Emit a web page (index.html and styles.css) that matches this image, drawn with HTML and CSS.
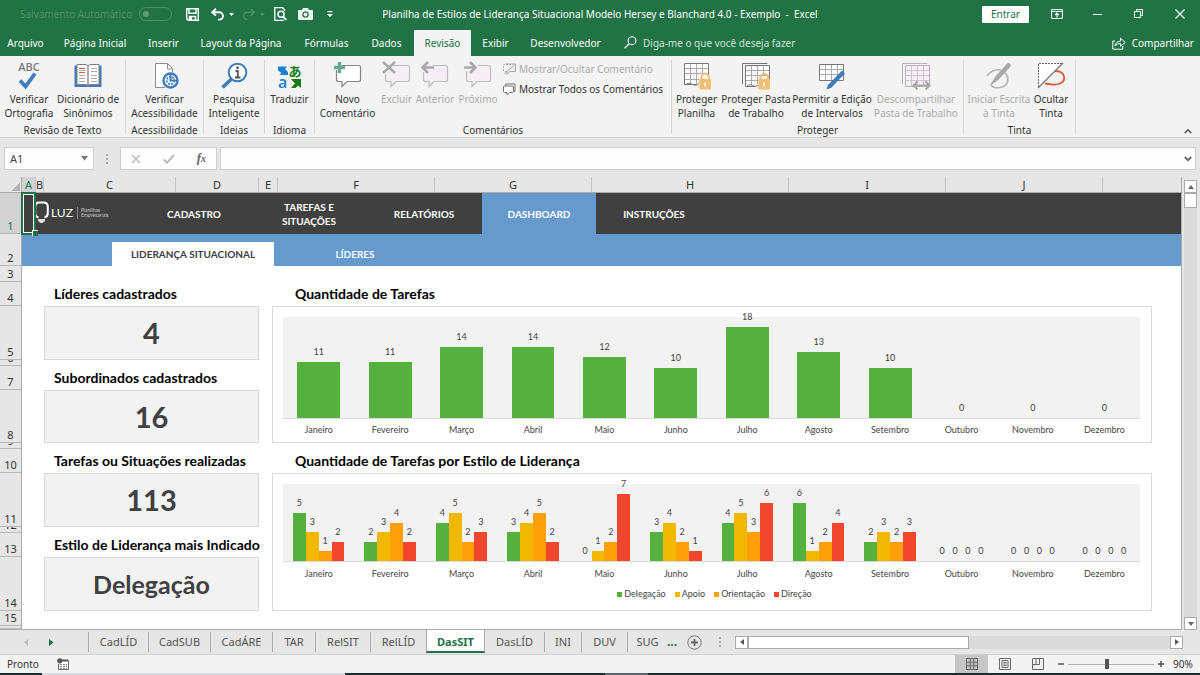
FILE: index.html
```html
<!DOCTYPE html>
<html lang="pt-BR">
<head>
<meta charset="utf-8">
<title>Planilha de Estilos de Liderança Situacional - Excel</title>
<link rel="stylesheet" href="styles.css">
</head>
<body>
<div class="app">
  <header class="titlebar">
    <div class="quick">
      <span class="autosave-label" id="autosave">Salvamento Automático</span>
      <button class="toggle" aria-labelledby="autosave"><span class="toggle-knob"></span></button>
      <button class="qbtn save" aria-label="Salvar"><svg width="13" height="13" viewBox="0 0 13 13"><path d="M.7 .7h11.6v11.6H2.2L.7 10.8z M3 .7v4.6h7V.7 M3.5 12.3V8.5h6v3.8" fill="none" stroke="#fff" stroke-width="1.5"/><path d="M4 9h2v3H4z" fill="#fff"/></svg></button>
      <button class="qbtn undo" aria-label="Desfazer"><svg width="24" height="13" viewBox="0 0 24 13"><path d="M5 .8 1.2 4.3 5 7.6 M1.5 4.3h6.8a3.6 3.6 0 0 1 0 7.3H7" fill="none" stroke="#fff" stroke-width="1.9"/><path d="M18 5h5l-2.500 3z" fill="#fff"/></svg></button>
      <button class="qbtn redo" aria-label="Refazer" disabled><svg width="24" height="13" viewBox="0 0 24 13"><path d="M8.500 .8 12.300 4.300 8.500 7.600 M12 4.300H5.200a3.500 3.500 0 0 0 0 7.200" fill="none" stroke="#4c8f69" stroke-width="1.600"/><path d="M18 5h5l-2.500 3z" fill="#4c8f69"/></svg></button>
      <button class="qbtn preview" aria-label="Visualizar impressão"><svg width="13" height="14" viewBox="0 0 13 14"><path d="M10.500 4V2.700L8.500.7H.8v12.600h9" fill="none" stroke="#fff" stroke-width="1.300"/><circle cx="7" cy="7.300" r="3" fill="none" stroke="#fff" stroke-width="1.500"/><path d="m9 9.500 3.300 3.300" stroke="#fff" stroke-width="1.800"/></svg></button>
      <button class="qbtn camera" aria-label="Câmera"><svg width="15" height="12" viewBox="0 0 15 12"><path d="M1 2h3l1-2h5l1 2h3q1 0 1 1v8q0 1-1 1H1q-1 0-1-1V3q0-1 1-1z" fill="#f1f6f3"/><circle cx="7.500" cy="6.500" r="2.600" fill="none" stroke="#217346" stroke-width="1.300"/></svg></button>
      <button class="qbtn more" aria-label="Personalizar"><svg width="6" height="7" viewBox="0 0 6 7"><path d="M.5 0h5v1.200h-5z M0 3h6L3 6z" fill="#fff"/></svg></button>
    </div>
    <div class="title">Planilha de Estilos de Liderança Situacional Modelo Hersey e Blanchard 4.0 - Exemplo &nbsp;-&nbsp; Excel</div>
    <div class="window-actions">
      <button class="signin">Entrar</button>
      <button class="wbtn" aria-label="Opções da faixa"><svg width="12" height="10" viewBox="0 0 12 10"><path d="M.6 .6h10.800v8.800H.600z M.6 2.500h10.800" fill="none" stroke="#fff"/><path d="M6 8.500V4.500M4.200 6 6 4.200 7.800 6" fill="none" stroke="#fff" stroke-width="1.200"/></svg></button>
      <button class="wbtn" aria-label="Minimizar"><svg width="10" height="10" viewBox="0 0 10 10"><path d="M0 5.500h9" stroke="#fff"/></svg></button>
      <button class="wbtn" aria-label="Restaurar"><svg width="10" height="10" viewBox="0 0 10 10"><path d="M.5 2.500h6v6h-6z M2.500 2.500v-2h6v6h-2" fill="none" stroke="#fff"/></svg></button>
      <button class="wbtn" aria-label="Fechar"><svg width="10" height="10" viewBox="0 0 10 10"><path d="m.5.5 9 9m0-9-9 9" stroke="#fff" stroke-width="1.100"/></svg></button>
    </div>
  </header>

  <nav class="menubar">
    <button class="menu m-arquivo">Arquivo</button>
    <button class="menu m-pagina">Página Inicial</button>
    <button class="menu m-inserir">Inserir</button>
    <button class="menu m-layout">Layout da Página</button>
    <button class="menu m-formulas">Fórmulas</button>
    <button class="menu m-dados">Dados</button>
    <button class="menu m-revisao active">Revisão</button>
    <button class="menu m-exibir">Exibir</button>
    <button class="menu m-dev">Desenvolvedor</button>
    <label class="tellme"><svg width="13" height="13" viewBox="0 0 13 13"><circle cx="8" cy="4.700" r="3.900" fill="none" stroke="#fff" stroke-width="1.100"/><path d="M5.200 7.600.7 12.300" stroke="#fff" stroke-width="1.300"/></svg><input type="text" placeholder="Diga-me o que você deseja fazer" aria-label="Diga-me o que você deseja fazer"></label>
    <button class="share"><svg width="14" height="13" viewBox="0 0 14 13"><path d="M3 4H.8v8.200h10V9" fill="none" stroke="#fff"/><path d="M3 9c.5-3 2.200-4.800 5.500-4.800V1.200l4.800 4.200-4.800 3.800V6.500C6 6.500 4.300 7.500 3 9z" fill="none" stroke="#fff"/></svg>Compartilhar</button>
  </nav>

  <section class="ribbon">
    <div class="group">
      <div class="tools">
        <button class="tool w58"><svg width="28" height="28" viewBox="0 0 28 28"><text x="14" y="9" text-anchor="middle" class="abc">ABC</text><path d="m5 18.500 5.500 6L20 11.500" fill="none" stroke="#3f7cbc" stroke-width="3.800"/></svg><span>Verificar<br>Ortografia</span></button>
        <button class="tool w60"><svg width="28" height="28" viewBox="0 0 28 28"><path d="M.5 3.500h27v21.500H.500z" fill="#3f7cbc"/><path d="M3 2.500h9l2 1.500 2-1.500h9v20h-9l-2 1-2-1H3z" fill="#fff" stroke="#7f7f7f"/><path d="M14 4v19" stroke="#777" stroke-width="1.200"/><path d="M5 6.500h6M5 10.500h6" stroke="#d9593c"/><path d="M5 8.500h6M5 13.500h6M5 16.500h6M5 19.500h6M17 6.500h6M17 9.500h6M17 13.500h6M17 16.500h6M17 19.500h6" stroke="#aaa"/></svg><span>Dicionário de<br>Sinônimos</span></button>
      </div>
      <div class="group-name">Revisão de Texto</div>
    </div>
    <div class="group g77">
      <div class="tools"><button class="tool w77"><svg width="28" height="28" viewBox="0 0 28 28"><path d="M4.500 1.500h12l5 5v19h-17z" fill="#fff" stroke="#8a8a8a"/><path d="M16.500 1.500v5.500h5" fill="none" stroke="#8a8a8a"/><circle cx="19.500" cy="18.500" r="9" fill="#f3f3f3"/><circle cx="19.500" cy="18.500" r="7" fill="#fff" stroke="#3f7cbc" stroke-width="2.400"/><circle cx="19.500" cy="18.500" r="3.800" fill="none" stroke="#3f7cbc" stroke-width="1.800" stroke-dasharray="2 1.200"/><path d="M19.500 12v6.500h7" fill="none" stroke="#3f7cbc" stroke-width="2"/></svg><span>Verificar<br>Acessibilidade</span></button></div>
      <div class="group-name">Acessibilidade</div>
    </div>
    <div class="group">
      <div class="tools"><button class="tool w60"><svg width="28" height="28" viewBox="0 0 28 28"><path d="M12 16.500 2.500 25.500" stroke="#3f7cbc" stroke-width="3.600"/><circle cx="17.500" cy="10.500" r="8.800" fill="#fff" stroke="#3f7cbc" stroke-width="2"/><path d="M15.500 9h2.300v6.500M15 15.500h5.500" fill="none" stroke="#555" stroke-width="1.800"/><circle cx="17.500" cy="5.800" r="1.400" fill="#555"/></svg><span>Pesquisa<br>Inteligente</span></button></div>
      <div class="group-name">Ideias</div>
    </div>
    <div class="group">
      <div class="tools"><button class="tool w49"><svg width="28" height="28" viewBox="0 0 28 28"><path d="M2 4.500h9l-2 2.500 3 3v3H3.500l2-2L2 8.500z" fill="#1b7fd4"/><text x="2" y="25.500" class="tr-a">a</text><text x="12.500" y="13.500" class="tr-j">あ</text><path d="M15 17h10v9l-3-2.500-2.500 2.500h-4.500l4-4.500z" fill="#107c10"/></svg><span>Traduzir</span></button></div>
      <div class="group-name">Idioma</div>
    </div>
    <div class="group g356">
      <div class="tools">
        <button class="tool w65"><svg width="28" height="28" viewBox="0 0 28 28"><path d="M8 3.500h16.500q2 0 2 2v12q0 2-2 2H13l-5 5v-5H4.500q-2 0-2-2V8" fill="#fff" stroke="#858585" stroke-width="1.200"/><path d="M5.500 0v11M0 5.500h11" stroke="#6aa78e" stroke-width="3.400"/></svg><span>Novo<br>Comentário</span></button>
        <button class="tool w33" disabled><svg width="28" height="28" viewBox="0 0 28 28"><path d="M10 3.500h14.500q2 0 2 2v12q0 2-2 2H13l-5 5v-5H4.500q-2 0-2-2V12" fill="#f5eef5" stroke="#bdbdbd" stroke-width="1.200"/><path d="m0 0 12 11M12 0 0 11" stroke="#a9a9a9" stroke-width="2.500"/></svg><span>Excluir</span></button>
        <button class="tool w44" disabled><svg width="28" height="28" viewBox="0 0 28 28"><path d="M12 3.500h12.500q2 0 2 2v12q0 2-2 2H13l-5 5v-5H4.500q-2 0-2-2V10" fill="#f5eef5" stroke="#bdbdbd" stroke-width="1.200"/><path d="M13 5.500H2M7 0 1.500 5.500 7 11" fill="none" stroke="#a9a9a9" stroke-width="2.500"/></svg><span>Anterior</span></button>
        <button class="tool w42" disabled><svg width="28" height="28" viewBox="0 0 28 28"><path d="M14 3.500h10.500q2 0 2 2v12q0 2-2 2H13l-5 5v-5H4.500q-2 0-2-2V9" fill="#f5eef5" stroke="#bdbdbd" stroke-width="1.200"/><path d="M0 5.500h11M6 0l5.500 5.500L6 11" fill="none" stroke="#a9a9a9" stroke-width="2.500"/></svg><span>Próximo</span></button>
        <div class="small-tools">
          <button class="small-tool" disabled><svg width="13" height="13" viewBox="0 0 13 13"><path d="M2.500 1h10v7.500H6.500L4 11.500V8.500H2" fill="#f5eef5" stroke="#a9a9a9"/><path d="M.5 8V1.500h9" fill="none" stroke="#a9a9a9" stroke-dasharray="2 1"/><path d="M11.500 2 1 11" stroke="#a9a9a9"/></svg>Mostrar/Ocultar Comentário</button>
          <button class="small-tool"><svg width="13" height="13" viewBox="0 0 13 13"><path d="M2.500 3V1h9.500v7.500h-1.500" fill="none" stroke="#777"/><path d="M1.500 3h8q1 0 1 1v4.500q0 1-1 1H6.500L4 12V9.500H1.500q-1 0-1-1V4q0-1 1-1z" fill="#fff" stroke="#777"/></svg>Mostrar Todos os Comentários</button>
        </div>
      </div>
      <div class="group-name">Comentários</div>
    </div>
    <div class="group g291">
      <div class="tools">
        <button class="tool w49"><svg width="28" height="28" viewBox="0 0 28 28"><path d="M1.500 1.500h24v16M1.500 1.500v21h12" fill="#fff" stroke="#777"/><path d="M7.500 2v20M13.500 2v20M19.500 2v12M2 6.500h23M2 11.500h23M2 17.500h14" stroke="#aaa"/><path d="M3 22.500c5-4 8 4 13-1" fill="none" stroke="#777"/><rect x="16.500" y="17" width="11.500" height="10.500" rx="1" fill="#efbf72"/><path d="M18.500 17v-1.500a3.700 3.700 0 0 1 7.400 0V17" fill="none" stroke="#efbf72" stroke-width="2"/><path d="M22.200 20.500v4" stroke="#fff" stroke-width="1.500"/></svg><span>Proteger<br>Planilha</span></button>
        <button class="tool w70"><svg width="28" height="28" viewBox="0 0 28 28"><path d="M.5 22V1.500h25" fill="none" stroke="#777"/><path d="M3.500 3.500h24v14M3.500 3.500v21h10" fill="#fff" stroke="#777"/><path d="M9.500 4v19M15.500 4v18M21.500 4v10M4 8.500h23M4 13.500h23M4 18.500h13" stroke="#aaa"/><path d="M5 24c4-4 7 3 12-1" fill="none" stroke="#777"/><rect x="16.500" y="17" width="11.500" height="10.500" rx="1" fill="#efbf72"/><path d="M18.500 17v-1.500a3.700 3.700 0 0 1 7.400 0V17" fill="none" stroke="#efbf72" stroke-width="2"/><path d="M22.200 20.500v4" stroke="#fff" stroke-width="1.500"/></svg><span>Proteger Pasta<br>de Trabalho</span></button>
        <button class="tool w82"><svg width="28" height="28" viewBox="0 0 28 28"><path d="M1.500 2.500h24v16h-24z" fill="#fff" stroke="#777"/><path d="M7.500 3v15M13.500 3v15M19.500 3v15M2 7.500h23M2 12.500h23" stroke="#aaa"/><path d="M25.500 10 11.500 24.500" stroke="#3f7cbc" stroke-width="4.200"/><path d="m10 22.500 3.500 3.300-5 1.700z" fill="#3f7cbc"/></svg><span>Permitir a Edição<br>de Intervalos</span></button>
        <button class="tool w86" disabled><svg width="28" height="28" viewBox="0 0 28 28"><path d="M.5 22V1.500h25" fill="none" stroke="#b9b2b9"/><path d="M3.500 3.500h24v21h-24z" fill="#f5eef5" stroke="#b9b2b9"/><path d="M9.500 4v20M15.500 4v20M21.500 4v20M4 8.500h23M4 13.500h23M4 18.500h23" stroke="#ccc5cc"/><path d="M12 23.500h15M15.500 19.500l-4 4 4 4M23.500 19.500l4 4-4 4" fill="none" stroke="#a9a9a9" stroke-width="2.200"/></svg><span>Descompartilhar<br>Pasta de Trabalho</span></button>
      </div>
      <div class="group-name">Proteger</div>
    </div>
    <div class="group g111">
      <div class="tools">
        <button class="tool w70" disabled><svg width="28" height="28" viewBox="0 0 28 28"><path d="M2 14c3-5 9-7 14-6M19 10c6 5 5 14-4 15.500-5 .8-9-.5-8-2.500" fill="none" stroke="#b5b5b5" stroke-width="1.700"/><path d="M23.500 3.500 12 16" stroke="#a9a9a9" stroke-width="4.600" stroke-linecap="round"/><path d="M10.500 15 4 24l8-5z" fill="#a9a9a9"/></svg><span>Iniciar Escrita<br>à Tinta</span></button>
        <button class="tool w34"><svg width="28" height="28" viewBox="0 0 28 28"><path d="M18 9c10 0 12 9 5 12.500-4 2-10 1-15 0" fill="none" stroke="#d9593c" stroke-width="1.800"/><path d="M1.500 1.500h24l-24 24z" fill="#fff"/><path d="M25 1.500H1.500V25" fill="none" stroke="#666" stroke-dasharray="2 1"/><path d="M26 1 1 26" stroke="#777" stroke-width="1.200"/></svg><span>Ocultar<br>Tinta</span></button>
      </div>
      <div class="group-name">Tinta</div>
    </div>
    <button class="collapse" aria-label="Recolher faixa"><svg width="8" height="6" viewBox="0 0 8 6"><path d="m.8 5 3.200-3.200L7.200 5" fill="none" stroke="#555" stroke-width="1.600"/></svg></button>
  </section>

  <section class="formula-bar">
    <div class="namebox"><input type="text" value="A1" aria-label="Caixa de nome"><svg width="7" height="5" viewBox="0 0 7 5"><path d="M0 0h7L3.500 4.500z" fill="#777"/></svg></div>
    <span class="dots"></span>
    <div class="fx">
      <button aria-label="Cancelar"><svg width="10" height="10" viewBox="0 0 10 10"><path d="m1 1 8 8m0-8-8 8" stroke="#bdbdbd" stroke-width="1.600"/></svg></button>
      <button aria-label="Inserir"><svg width="12" height="10" viewBox="0 0 12 10"><path d="M.8 5.500 4 8.700 11 1" fill="none" stroke="#bdbdbd" stroke-width="2"/></svg></button>
      <button class="fx-label" aria-label="Inserir função">f<small>x</small></button>
    </div>
    <div class="formula"><input type="text" aria-label="Barra de fórmulas"><svg width="8" height="6" viewBox="0 0 8 6"><path d="m.8 1 3.200 3.200L7.200 1" fill="none" stroke="#666" stroke-width="1.800"/></svg></div>
  </section>

  <main class="workbook">
    <div class="grid-area">
      <div class="col-heads">
        <span class="corner"></span><span class="ca">A</span><span class="cb">B</span><span class="cc">C</span><span class="cd">D</span><span class="ce">E</span><span class="cf">F</span><span class="cf">G</span><span class="ch">H</span><span class="cf">I</span><span class="cf">J</span>
      </div>
      <div class="sheet">
        <div class="row-heads">
          <span class="current">1</span><span>2</span><span>3</span><span>4</span><span>5</span><span>6</span><span>7</span><span>8</span><span>9</span><span>10</span><span>11</span><span>12</span><span>13</span><span>14</span><span>15</span><span></span>
        </div>
        <div class="page">
          <div class="selection"></div>
          <nav class="mainnav">
            <div class="logo"><svg width="15" height="23" viewBox="0 0 15 23"><path d="M4.500 16.500C2 16 1.200 14 1.200 12V6q0-4.500 4-4.500h4.600q4 0 4 4.500v6c0 2.500-1 4-3.300 4.500" fill="none" stroke="#fff" stroke-width="2"/><path d="M4 18h7v2L8.500 22h-2L4 20z" fill="#ddd"/></svg><b>LUZ</b><span>Planilhas<br>Empresariais</span></div>
            <a href="#">CADASTRO</a><a href="#">TAREFAS E SITUAÇÕES</a><a href="#">RELATÓRIOS</a><a href="#" class="on">DASHBOARD</a><a href="#">INSTRUÇÕES</a>
          </nav>
          <nav class="subnav"><a href="#" class="on">LIDERANÇA SITUACIONAL</a><a href="#">LÍDERES</a></nav>
          <div class="dashboard">
            <h2 class="k1">Líderes cadastrados</h2><div class="card v1">4</div>
            <h2 class="k2">Subordinados cadastrados</h2><div class="card v2">16</div>
            <h2 class="k3">Tarefas ou Situações realizadas</h2><div class="card v3">113</div>
            <h2 class="k4">Estilo de Liderança mais Indicado</h2><div class="card v4 word">Delegação</div>
            <h2 class="t1">Quantidade de Tarefas</h2>
            <div class="chart c1"><div class="plot" id="plot-total"></div><div class="months"></div></div>
            <h2 class="t2">Quantidade de Tarefas por Estilo de Liderança</h2>
            <div class="chart c2"><div class="plot" id="plot-style"></div><div class="months"></div>
              <div class="legend"><span><i class="s0"></i>Delegação</span><span><i class="s1"></i>Apoio</span><span><i class="s2"></i>Orientação</span><span><i class="s3"></i>Direção</span></div>
            </div>
          </div>
        </div>
      </div>
    </div>
    <div class="vscroll">
      <button aria-label="Rolar para cima"><svg width="6" height="4" viewBox="0 0 6 4"><path d="M0 4h6L3 0z" fill="#666"/></svg></button>
      <span class="vthumb"></span>
      <button class="down" aria-label="Rolar para baixo"><svg width="6" height="4" viewBox="0 0 6 4"><path d="M0 0h6L3 4z" fill="#666"/></svg></button>
    </div>
  </main>

  <footer class="sheet-tabs">
    <div class="tab-nav">
      <button aria-label="Planilha anterior" disabled><svg width="5" height="7" viewBox="0 0 5 7"><path d="M4 0v7L0 3.500z" fill="#bbb"/></svg></button>
      <button aria-label="Próxima planilha"><svg width="5" height="7" viewBox="0 0 5 7"><path d="M0 0v7l4.500-3.500z" fill="#107040"/></svg></button>
    </div>
    <button class="stab w60">CadLÍD</button><button class="stab w62">CadSUB</button><button class="stab w62">CadÁRE</button><button class="stab w43">TAR</button><button class="stab w55">RelSIT</button><button class="stab w56">RelLÍD</button><button class="stab w59 on">DasSIT</button><button class="stab w59">DasLÍD</button><button class="stab w37">INI</button><button class="stab w46">DUV</button><button class="stab w40">SUG</button>
    <button class="ellipsis" aria-label="Mais planilhas">...</button>
    <button class="add" aria-label="Nova planilha"><svg width="15" height="15" viewBox="0 0 15 15"><circle cx="7.500" cy="7.500" r="6.700" fill="none" stroke="#777"/><path d="M7.500 4v7M4 7.500h7" stroke="#666" stroke-width="1.800"/></svg></button>
    <span class="dots"></span>
    <div class="hscroll">
      <button aria-label="Rolar para a esquerda"><svg width="4" height="6" viewBox="0 0 4 6"><path d="M4 0v6L0 3z" fill="#555"/></svg></button>
      <span class="hthumb"></span><span class="htrack"></span>
      <button aria-label="Rolar para a direita"><svg width="4" height="6" viewBox="0 0 4 6"><path d="M0 0v6l4-3z" fill="#555"/></svg></button>
    </div>
  </footer>

  <footer class="status">
    <span class="ready">Pronto</span>
    <button aria-label="Gravar macro"><svg width="12" height="12" viewBox="0 0 12 12"><path d="M5 2.500h6.500v9h-10V6" fill="#fff" stroke="#666"/><path d="M3 6.500h7M3 8.500h7M3 10.300h7" stroke="#777" stroke-dasharray="2 1"/><path d="M5 2.500h6" stroke="#555" stroke-width="2"/><circle cx="2.800" cy="2.800" r="2.600" fill="#555"/></svg></button>
    <div class="views">
      <button class="view on" aria-label="Normal"><svg width="12" height="12" viewBox="0 0 12 12"><path d="M.5.5h11v11H.500zM4.200.5v11M7.800.5v11M.5 4.200h11M.5 7.800h11" fill="none" stroke="#666"/></svg></button>
      <button class="view" aria-label="Layout da página"><svg width="12" height="12" viewBox="0 0 12 12"><path d="M.5.5h11v11H.500zM3 2.500h6v7H3z" fill="none" stroke="#666"/><path d="M4.200 4.500h3.600M4.200 6h3.600M4.200 7.500h3.600" stroke="#777"/></svg></button>
      <button class="view" aria-label="Quebras de página"><svg width="12" height="12" viewBox="0 0 12 12"><path d="M.5.5h11v11H.500zM.5 6.500h7v-6M4 .5v6" fill="none" stroke="#666"/></svg></button>
      <button class="zbtn" aria-label="Reduzir"><svg width="6" height="6" viewBox="0 0 6 6"><path d="M0 3h6" stroke="#555" stroke-width="1.500"/></svg></button>
      <input class="zoom" type="range" min="0" max="100" value="45" aria-label="Zoom">
      <button class="zbtn" aria-label="Ampliar"><svg width="6" height="6" viewBox="0 0 6 6"><path d="M0 3h6M3 0v6" stroke="#555" stroke-width="1.500"/></svg></button>
      <span class="pct">90%</span>
    </div>
  </footer>
  <div class="taskline"></div>
</div>
<script src="script.js"></script>
</body>
</html>
```

FILE: styles.css
```css
* { box-sizing: border-box; }
body {
  margin: 0;
  font: 10px/14px "Noto Sans", "Open Sans", "Noto Sans CJK JP", sans-serif;
  color: #333;
  background: #e6e6e6;
}
button, input { font: inherit; color: inherit; }
button { border: 0; padding: 0; background: none; white-space: nowrap; }
input { border: 0; padding: 0; background: none; outline: 0; min-width: 0; }
svg { display: block; flex: none; overflow: visible; }
a { color: inherit; text-decoration: none; }
.app { display: flex; flex-direction: column; min-height: 100vh; }

/* title bar */
.titlebar {
  display: grid;
  grid-template-columns: 1fr auto 1fr;
  align-items: center;
  height: 28px;
  background: #217346;
  color: #fff;
}
.quick { display: flex; align-items: center; padding-left: 20px; }
.autosave-label { width: 119px; color: #4f9069; white-space: nowrap; }
.toggle { width: 33px; height: 14px; border: 1px solid #4f9069; border-radius: 7px; padding: 0 3px; }
.toggle-knob { display: block; width: 6px; height: 6px; border-radius: 50%; background: #5f9b78; }
.save { margin-left: 14px; }
.undo { margin-left: 12px; }
.redo { margin-left: 7px; }
.preview { margin-left: 8px; }
.camera { margin-left: 11px; }
.more { margin-left: 14px; }
.title { white-space: nowrap; }
.window-actions { display: flex; justify-content: flex-end; align-items: center; }
.signin { width: 47px; height: 17px; margin-right: 7px; background: #fff; color: #217346; border-radius: 1px; }
.wbtn { width: 41px; height: 28px; display: flex; align-items: center; justify-content: center; }

/* menu tabs */
.menubar { display: flex; height: 28px; background: #217346; color: #fff; }
.menu { height: 26px; margin-top: 2px; }
.m-arquivo { width: 51px; }
.m-pagina { width: 88px; }
.m-inserir { width: 49px; }
.m-layout { width: 106px; }
.m-formulas { width: 65px; }
.m-dados { width: 55px; }
.m-revisao { width: 57px; }
.m-exibir { width: 49px; }
.m-dev { width: 91px; }
.menu.active { background: #f3f3f3; color: #217346; }
.tellme { display: flex; align-items: center; gap: 6px; flex: 1; padding-left: 13px; }
.tellme input { flex: 1; padding-top: 2px; }
.tellme input::placeholder { color: #cfe3d7; opacity: 1; }
.share { display: flex; align-items: center; gap: 6px; padding: 2px 6px 0 0; }

/* ribbon */
.ribbon {
  display: flex;
  height: 82px;
  padding: 4px 0 0;
  background: #f3f3f3;
  border-bottom: 1px solid #d4d4d4;
}
.group { position: relative; padding: 2px 0 0; border-right: 1px solid #d6d6d6; height: 74px; }
.group:first-child { width: 126px; }
.g77 { width: 78px; }
.g356 { width: 357px; }
.g291 { width: 292px; }
.g111 { width: 112px; }
.tools { display: flex; height: 61px; }
.tool { display: flex; flex-direction: column; align-items: center; gap: 2px; height: 60px; }
.tool span { display: flex; justify-content: center; text-align: center; }
.tool:disabled, .small-tool:disabled { color: #ababab; }
.w33 { width: 33px; } .w34 { width: 34px; } .w37 { width: 37px; } .w40 { width: 40px; }
.w42 { width: 42px; } .w43 { width: 43px; } .w44 { width: 44px; } .w46 { width: 46px; }
.w49 { width: 49px; } .w55 { width: 55px; } .w56 { width: 56px; }
.w58 { width: 58px; } .w59 { width: 59px; } .w60 { width: 60px; } .w62 { width: 62px; }
.w65 { width: 65px; } .w70 { width: 70px; } .w77 { width: 77px; }
.w82 { width: 82px; } .w86 { width: 86px; }
.abc { font: 600 11px "Open Sans", sans-serif; fill: #7a7a7a; }
.tr-a { font: 600 16px "Open Sans", sans-serif; fill: #1b7fd4; }
.tr-j { font: 700 13px "Noto Sans CJK JP", sans-serif; fill: #107c10; }
.group-name { text-align: center; }
.small-tools { padding-left: 4px; display: flex; flex-direction: column; gap: 6px; }
.small-tool { display: flex; align-items: center; gap: 3px; height: 14px; }
.collapse { align-self: flex-end; margin: 0 8px 3px auto; }

/* formula bar */
.formula-bar { display: flex; align-items: center; height: 39px; padding: 2px 4px 0 4px; }
.namebox, .fx, .formula { display: flex; align-items: center; height: 23px; background: #fdfdfd; border: 1px solid #cfcfcf; }
.namebox { width: 90px; padding: 0 5px; }
.namebox input { flex: 1; font-size: 11px; color: #444; }
.dots { width: 2px; height: 10px; background: repeating-linear-gradient(#aaa 0 2px, transparent 2px 4px); }
.formula-bar .dots { margin: 0 12px; }
.fx { width: 97px; justify-content: space-between; padding: 0 10px; }
.fx-label { font: italic bold 13px/14px "Liberation Serif", serif; color: #666; }
.fx-label small { font-size: 10px; }
.formula { flex: 1; margin-left: 3px; padding: 0 3px; }
.formula input { flex: 1; }

/* worksheet */
.workbook { display: flex; flex: 1; }
.grid-area { flex: 1; min-width: 0; display: flex; flex-direction: column; border-right: 1px solid #ababab; border-bottom: 1px solid #ababab; }
.col-heads { display: flex; height: 16px; border-bottom: 1px solid #ababab; font-size: 11px; line-height: 16px; text-align: center; }
.col-heads span { border-right: 1px solid #c4c4c4; }
.col-heads .corner { width: 22px; border-right: 1px solid #ababab; background: linear-gradient(135deg, transparent 50%, #b4b4b4 50%) 12px 6px / 8px 8px no-repeat; }
.col-heads .ca { width: 14px; background: #d2d2d2; color: #217346; }
.cb { width: 8px; } .cc { width: 132px; } .cd { width: 83px; } .ce { width: 19px; } .cf { width: 157px; } .ch { width: 197px; }
.sheet { display: flex; flex: 1; background: #fff; }
.row-heads {
  width: 22px;
  display: grid;
  grid-template-rows: 41px 32px 16px 24px 54px 6px 24px 53px 6px 24px 54px 6px 24px 54px 15px 1fr;
  background: #e6e6e6;
  border-right: 1px solid #ababab;
}
.row-heads span { display: flex; align-items: flex-end; justify-content: center; overflow: hidden; border-bottom: 1px solid #b8b8b8; font-size: 11px; min-height: 0; }
.row-heads .current { background: #d2d2d2; color: #217346; }
.page { flex: 1; min-width: 0; position: relative; font-family: Lato, "Open Sans", sans-serif; }
.selection { position: absolute; left: -1px; top: -1px; width: 15px; height: 43px; border: 2px solid #217346; box-shadow: inset 0 0 0 1px #fff; }
.selection::after { content: ""; position: absolute; right: -4px; bottom: -3px; width: 5px; height: 5px; background: #217346; border: 1px solid #fff; border-width: 1px 0 0 1px; }
.mainnav { display: flex; gap: 1px; height: 41px; background: #404040; color: #fff; font-weight: 700; }
.mainnav a { width: 114px; padding: 0 24px; display: flex; align-items: center; justify-content: center; text-align: center; font-size: 10px; line-height: 14px; }
.mainnav a.on { background: #6699cc; }
.logo { width: 114px; padding: 0 0 2px 12px; display: flex; align-items: center; gap: 2px; }
.logo b { font-size: 12px; font-weight: 400; }
.logo span { margin-left: 2px; padding: 1px 0 1px 3px; border-left: 1px solid #888; font: 5px/5px Lato, "Open Sans", sans-serif; color: #ccc; }
.subnav { display: flex; align-items: flex-end; height: 32px; padding-left: 90px; background: #6699cc; color: #fff; font-size: 10px; font-weight: 700; }
.subnav a { width: 162px; height: 24px; line-height: 25px; text-align: center; white-space: nowrap; }
.subnav a.on { background: #fff; color: #404040; }
.dashboard {
  display: grid;
  grid-template-columns: 215px 1fr;
  grid-template-rows: 24px 54px 6px 24px 53px 6px 24px 54px 6px 24px 54px;
  column-gap: 13px;
  padding: 16px 29px 0 22px;
}
.dashboard h2 { margin: 0; padding-left: 10px; font-size: 14px; line-height: 24px; color: #000; white-space: nowrap; }
.dashboard .t1, .dashboard .t2 { grid-column: 2; padding-left: 23px; }
.card { display: flex; align-items: center; justify-content: center; background: #f2f2f2; border: 1px solid #d9d9d9; font-size: 29px; line-height: 36px; font-weight: 700; color: #404040; }
.card.word { font-size: 25px; }
.k1, .t1 { grid-row: 1; } .v1 { grid-row: 2; }
.k2 { grid-row: 4; } .v2 { grid-row: 5; }
.k3, .t2 { grid-row: 7; } .v3 { grid-row: 8; }
.k4 { grid-row: 10; } .v4 { grid-row: 11; }
.chart { grid-column: 2; border: 1px solid #d9d9d9; padding: 10px 11px 0 10px; font-size: 9px; line-height: 12px; color: #444; }
.c1 { grid-row: 2 / 6; }
.c2 { grid-row: 8 / 12; }
.plot { display: flex; background: #f2f2f2; border-bottom: 1px solid #d9d9d9; }
.c1 .plot { height: 102px; }
.c2 .plot { height: 78px; }
.cell { flex: 1; display: flex; align-items: flex-end; justify-content: center; }
.bar { position: relative; width: 60%; background: #56b03e; }
.c2 .bar { width: 18%; }
.bar span { position: absolute; left: 0; right: 0; bottom: 100%; padding-bottom: 4px; text-align: center; }
.bar.s0, .legend .s0 { background: #56b03e; }
.bar.s1, .legend .s1 { background: #f2b800; }
.bar.s2, .legend .s2 { background: #ff9f0a; }
.bar.s3, .legend .s3 { background: #f2452e; }
.months { display: flex; padding-top: 5px; }
.c2 .months { padding-top: 6px; }
.months span { flex: 1; text-align: center; }
.legend { display: flex; justify-content: center; gap: 9px; padding: 8px 0 0 6px; }
.legend span { display: flex; align-items: center; gap: 2px; }
.legend i { width: 5px; height: 5px; }

/* scrollbars */
.vscroll { display: flex; flex-direction: column; width: 13px; margin: 3px 3px 0 2px; background: #dadada; }
.vscroll button, .hscroll button { width: 13px; height: 13px; display: flex; align-items: center; justify-content: center; background: #fff; border: 1px solid #ababab; }
.vthumb { height: 15px; background: #fff; border: 1px solid #ababab; }
.vscroll .down { margin-top: auto; }
.hscroll { flex: 1; display: flex; margin-right: 17px; background: #dadada; }
.hthumb { flex: 221; height: 13px; background: #fff; border: 1px solid #ababab; }
.htrack { flex: 202; }

/* sheet tabs */
.sheet-tabs { display: flex; align-items: center; height: 25px; border-bottom: 1px solid #cfcfcf; }
.tab-nav { display: flex; gap: 20px; width: 88px; padding-left: 24px; }
.stab { position: relative; height: 20px; font-size: 11px; color: #555; border-left: 1px solid #ababab; }
.stab.on { height: 23px; padding-top: 2px; align-self: flex-start; background: #fff; color: #217346; font-weight: 700; border-bottom: 2px solid #217346; border-right: 1px solid #ababab; }
.stab.on + .stab { border-left: 0; }
.ellipsis { width: 10px; font-weight: 700; color: #217346; font-size: 12px; }
.add { margin-left: 10px; }
.sheet-tabs .dots { margin: 0 14px 0 17px; }

/* status bar */
.status { display: flex; align-items: center; height: 18px; padding-left: 7px; background: #f3f3f3; }
.ready { width: 50px; }
.views { display: flex; align-items: center; margin-left: auto; }
.view { width: 33px; height: 18px; display: flex; align-items: center; justify-content: center; }
.view.on { background: #c6c6c6; }
.zbtn { margin: 0 4px; }
.zoom { appearance: none; width: 86px; height: 12px; margin: 0; background: linear-gradient(#b0b0b0, #b0b0b0) center / 100% 1px no-repeat; }
.zoom::-webkit-slider-thumb { appearance: none; width: 4px; height: 10px; background: #555; }
.pct { width: 27px; margin-left: 5px; white-space: nowrap; }
.taskline { height: 2px; background: linear-gradient(90deg, #1c2b2e 42px, #d8dcdc 42px 345px, #1c2b2e 345px 605px, #5a6668 605px 648px, #1c2b2e 648px); }
```

FILE: script.js
```js
const months = ["Janeiro", "Fevereiro", "Março", "Abril", "Maio", "Junho", "Julho", "Agosto", "Setembro", "Outubro", "Novembro", "Dezembro"];
const byStyle = [
  [5, 3, 1, 2], [2, 3, 4, 2], [4, 5, 2, 3], [3, 4, 5, 2], [0, 1, 2, 7], [3, 4, 2, 1],
  [4, 5, 3, 6], [6, 1, 2, 4], [2, 3, 2, 3], [0, 0, 0, 0], [0, 0, 0, 0], [0, 0, 0, 0]
];
const totals = [11, 11, 14, 14, 12, 10, 18, 13, 10, 0, 0, 0];

function fill(id, rows, max) {
  document.getElementById(id).innerHTML = rows.map(row =>
    '<div class="cell">' + row.map((v, i) =>
      `<div class="bar s${i}" style="height:${v / max * 100}%"><span>${v}</span></div>`).join("") + "</div>").join("");
}

fill("plot-total", totals.map(v => [v]), 20);
fill("plot-style", byStyle, 8);
document.querySelectorAll(".months").forEach(el => {
  el.innerHTML = months.map(m => `<span>${m}</span>`).join("");
});
```
